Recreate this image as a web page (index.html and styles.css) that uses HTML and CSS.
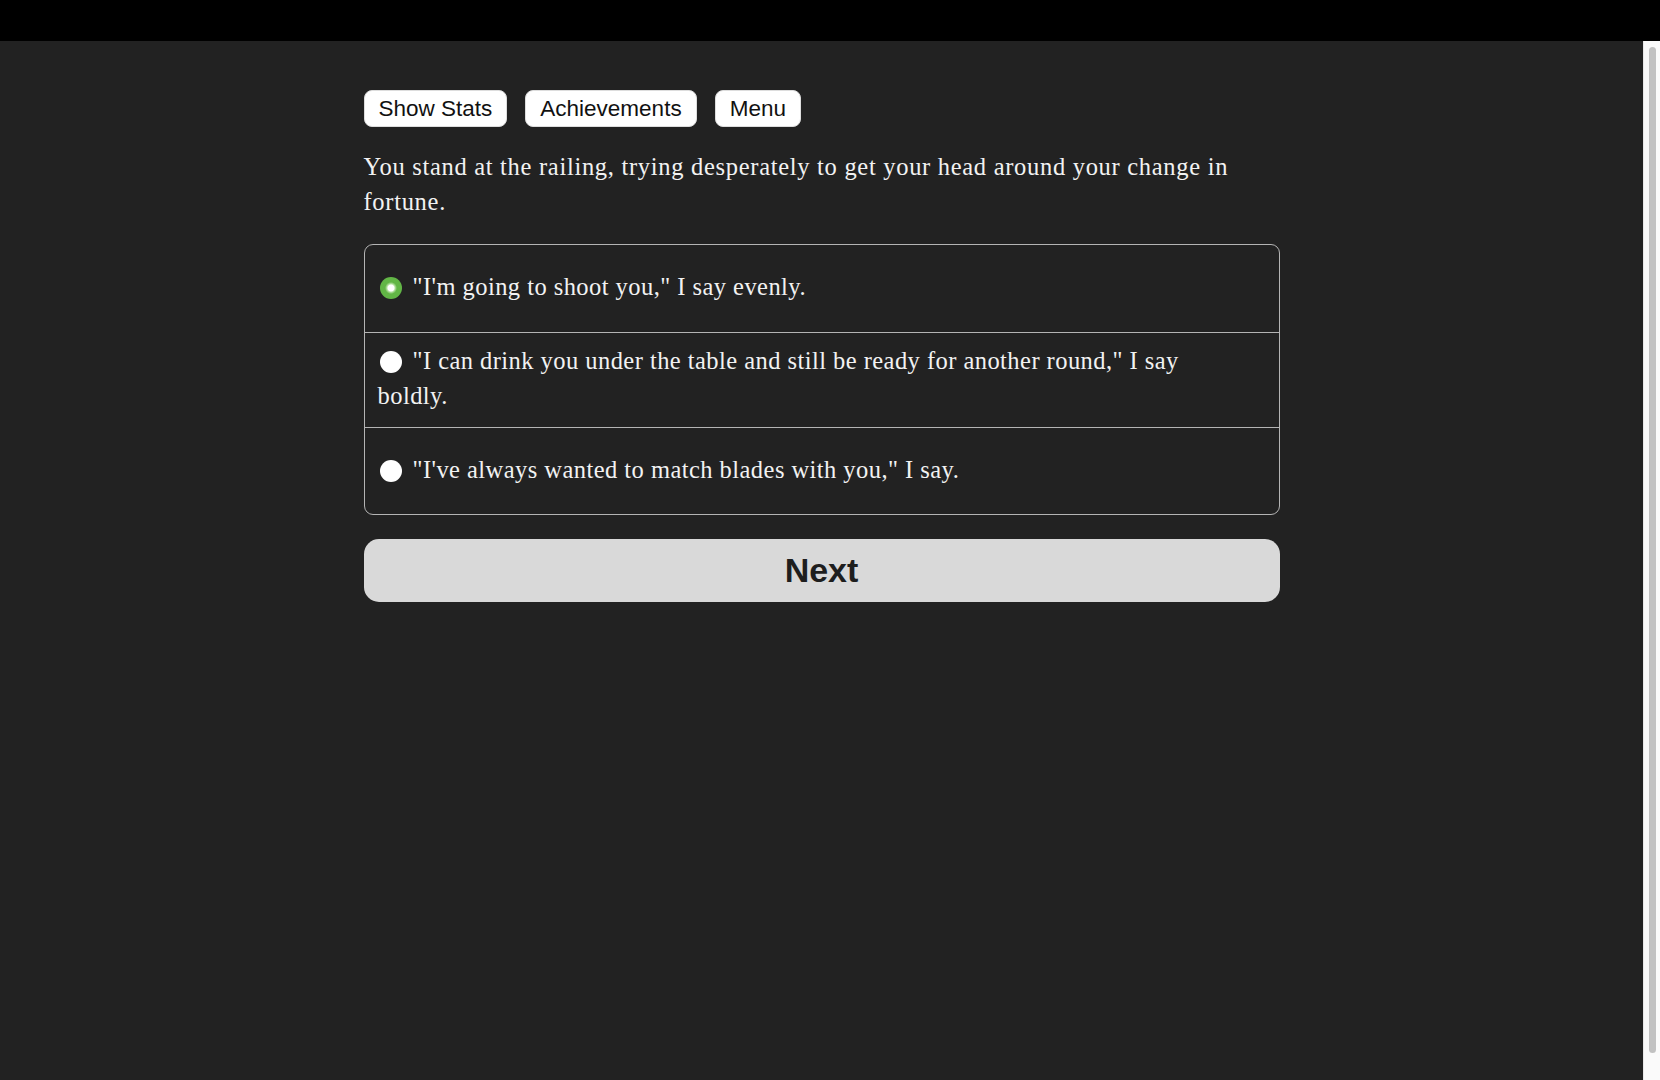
FILE: index.html
```html
<!DOCTYPE html>
<html lang="en">
  <head>
    <meta charset="UTF-8" />
    <meta name="viewport" content="width=device-width, initial-scale=1.0" />
    <title>Choice</title>
    <link rel="stylesheet" href="styles.css">
  </head>

  <body>
    <div class="topbar"></div>

    <div class="frame">
      <div class="page">
        <div class="story">
          <div class="toolbar">
            <button class="tool">Show Stats</button>
            <button class="tool">Achievements</button>
            <button class="tool">Menu</button>
          </div>

          <p class="text">
            You stand at the railing, trying desperately to get your head around your change in fortune.
          </p>

          <form class="choices">
            <label class="choice">
              <span><span class="radio checked"></span>"I'm going to shoot you," I say evenly.</span>
            </label>
            <label class="choice">
              <span><span class="radio"></span>"I can drink you under the table and still be ready for another round," I say boldly.</span>
            </label>
            <label class="choice">
              <span><span class="radio"></span>"I've always wanted to match blades with you," I say.</span>
            </label>
          </form>

          <button class="next">Next</button>
        </div>
      </div>

      <div class="scrollbar">
        <div class="thumb"></div>
      </div>
    </div>
  </body>
</html>
```

FILE: styles.css
```css
html,
body {
  margin: 0;
  height: 100%;
}

body {
  display: flex;
  flex-direction: column;
  background-color: #222;
  color: #f2f2f2;
  font-family: "Liberation Serif", serif;
}

.topbar {
  height: 41px;
  background-color: #000;
}

.frame {
  flex: 1;
  display: flex;
  min-height: 0;
}

.page {
  flex: 1;
}

.story {
  width: 916px;
  margin: 49px auto 0;
}

.toolbar {
  display: flex;
  gap: 18px;
}

.tool {
  height: 37px;
  padding: 0 14px;
  border: 1px solid #ddd;
  border-radius: 8px;
  background-color: #fff;
  color: #111;
  font-family: "Liberation Sans", Arial, sans-serif;
  font-size: 22.5px;
}

.text {
  margin: 22px 0 25px;
  font-size: 24.5px;
  letter-spacing: 0.7px;
  line-height: 35px;
}

.choices {
  border: 1px solid #b4b4b4;
  border-radius: 9px;
  overflow: hidden;
}

.choice {
  display: flex;
  align-items: center;
  min-height: 87px;
  padding: 10px 40px 14px 13px;
  box-sizing: border-box;
  font-size: 24.5px;
  letter-spacing: 0.45px;
  line-height: 35px;
}

.choice + .choice {
  border-top: 1px solid #b4b4b4;
}

.radio {
  display: inline-block;
  width: 22px;
  height: 22px;
  margin: 0 11px 0 2px;
  border-radius: 50%;
  background-color: #fff;
  vertical-align: -4px;
}

.radio.checked {
  background: radial-gradient(circle, #fff 0 3px, #b9e3a6 4px, #62b646 6px);
}

.next {
  display: block;
  width: 100%;
  height: 63px;
  margin-top: 24px;
  border: none;
  border-radius: 15px;
  background-color: #d9d9d9;
  color: #1e1e1e;
  font-family: "Liberation Sans", Arial, sans-serif;
  font-size: 34px;
  font-weight: bold;
}

.scrollbar {
  width: 17px;
  padding: 6px 4px 27px 5px;
  box-sizing: border-box;
  background-color: #fafafa;
  border-left: 1px solid #e8e8e8;
}

.thumb {
  height: 100%;
  border-radius: 4px;
  background-color: #c1c1c1;
}
```
